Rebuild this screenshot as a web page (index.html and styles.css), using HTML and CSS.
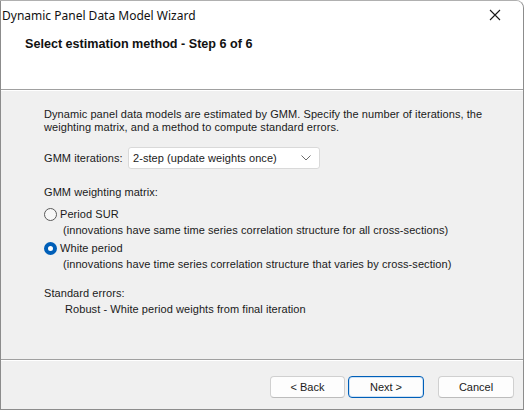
FILE: index.html
```html
<!DOCTYPE html>
<html>
<head>
<meta charset="utf-8">
<link rel="stylesheet" href="styles.css">
</head>
<body>
<div class="window">
  <div class="titlebar">
    <span class="title">Dynamic Panel Data Model Wizard</span>
    <svg class="close" width="12" height="12" viewBox="0 0 12 12"><path d="M1 1 L11 11 M11 1 L1 11" stroke="#1a1a1a" stroke-width="1.1" fill="none"/></svg>
  </div>
  <div class="header">
    <div class="step">Select estimation method - Step 6 of 6</div>
  </div>
  <div class="content">
    <p class="intro">Dynamic panel data models are estimated by GMM. Specify the number of iterations, the<br>weighting matrix, and a method to compute standard errors.</p>
    <div class="iter-row">
      <span class="label">GMM iterations:</span>
      <div class="select">
        <span>2-step (update weights once)</span>
        <svg width="10" height="6" viewBox="0 0 10 6"><path d="M0.5 0.5 L5 5 L9.5 0.5" stroke="#6b6b6b" stroke-width="1" fill="none"/></svg>
      </div>
    </div>
    <div class="group-label">GMM weighting matrix:</div>
    <div class="radio-row">
      <span class="radio"></span>
      <span>Period SUR</span>
    </div>
    <div class="note">(innovations have same time series correlation structure for all cross-sections)</div>
    <div class="radio-row second">
      <span class="radio checked"></span>
      <span>White period</span>
    </div>
    <div class="note">(innovations have time series correlation structure that varies by cross-section)</div>
    <div class="group-label se">Standard errors:</div>
    <div class="se-value">Robust - White period weights from final iteration</div>
  </div>
  <div class="footer">
    <button class="btn back">&lt; Back</button>
    <button class="btn default">Next &gt;</button>
    <button class="btn cancel">Cancel</button>
  </div>
</div>
</body>
</html>
```
FILE: styles.css
```css
html, body {
  margin: 0;
  padding: 0;
  background: #ffffff;
}
body {
  width: 528px;
  height: 410px;
  overflow: hidden;
  font-family: "Liberation Sans", Arial, sans-serif;
  font-size: 11px;
  color: #000;
}
.window {
  width: 522px;
  height: 408px;
  border: 1px solid #8c8c8c;
  border-top-color: #b0b0b0;
  border-radius: 0 8px 0 0;
  background: #f0f0f0;
  display: flex;
  flex-direction: column;
  overflow: hidden;
  box-sizing: content-box;
}
.titlebar {
  height: 28px;
  background: #fff;
  display: flex;
  align-items: center;
  justify-content: space-between;
  padding: 0 22px 0 1px;
}
.title {
  font-family: "Noto Sans", "Open Sans", sans-serif;
  font-size: 12px;
  color: #111;
}
.close {
  display: block;
}
.header {
  height: 61px;
  background: #fff;
  border-bottom: 1px solid #a0a0a0;
  box-shadow: 0 1px 0 #ffffff;
  padding-left: 24px;
  padding-top: 8px;
  box-sizing: border-box;
}
.step {
  font-weight: bold;
  font-size: 12.6px;
  color: #111;
}
.content {
  flex: 1;
  padding: 18px 0 0 43px;
  box-sizing: border-box;
  border-bottom: 1px solid #a0a0a0;
  box-shadow: 0 1px 0 #ffffff;
  color: #1a1a1a;
  letter-spacing: 0.07px;
}
.intro {
  margin: 0;
  line-height: 13px;
}
.iter-row {
  display: flex;
  align-items: center;
  margin-top: 13px;
  height: 22px;
}
.label {
  width: 84px;
}
.select {
  width: 192px;
  height: 22px;
  box-sizing: border-box;
  background: #fff;
  border: 1px solid #d9d9d9;
  border-radius: 3px;
  display: flex;
  align-items: center;
  justify-content: space-between;
  padding: 0 8px 0 4px;
}
.group-label {
  margin-top: 17px;
  line-height: 13px;
}
.radio-row {
  display: flex;
  align-items: center;
  gap: 3px;
  margin-top: 8px;
  height: 14px;
}
.radio-row.second {
  margin-top: 4px;
}
.radio {
  width: 13px;
  height: 13px;
  box-sizing: border-box;
  border-radius: 50%;
  border: 1px solid #5a5a5a;
  background: #f7f7f7;
}
.radio.checked {
  border: 4px solid #005fb8;
  background: #fff;
}
.note {
  padding-left: 19px;
  margin-top: 3px;
  line-height: 13px;
}
.group-label.se {
  margin-top: 16px;
}
.se-value {
  padding-left: 21px;
  margin-top: 3px;
  line-height: 13px;
}
.footer {
  height: 49px;
  display: flex;
  align-items: flex-start;
  padding: 16px 0 0 269px;
  box-sizing: border-box;
}
.btn {
  width: 76px;
  height: 22px;
  box-sizing: border-box;
  font-family: "Liberation Sans", Arial, sans-serif;
  font-size: 11px;
  color: #1a1a1a;
  background: #fdfdfd;
  border: 1px solid #d0d0d0;
  border-bottom-color: #bcbcbc;
  border-radius: 4px;
  padding: 0;
  margin: 0;
}
.btn.back {
  width: 75px;
  margin-right: 3px;
}
.btn.default {
  border: 1px solid #005fb8;
  box-shadow: inset 0 0 0 1px #cfe2f5;
}
.btn.cancel {
  margin-left: 14px;
}
```
